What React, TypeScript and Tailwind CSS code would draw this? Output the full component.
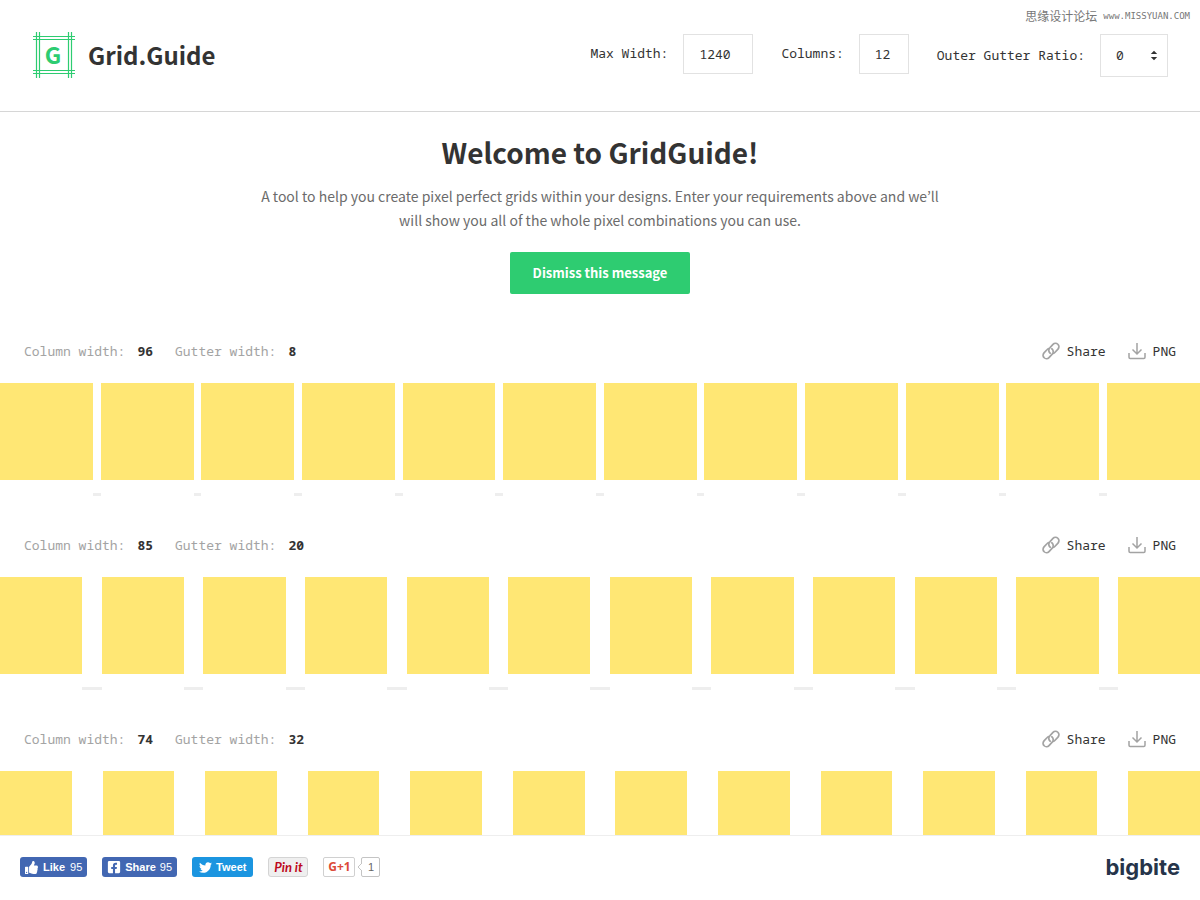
import { useState } from 'react';
import { FaFacebookSquare, FaThumbsUp, FaTwitter } from 'react-icons/fa';

type Grid = {
  column: number;
  gutter: number;
};

const grids: Grid[] = [
  { column: 96, gutter: 8 },
  { column: 85, gutter: 20 },
  { column: 74, gutter: 32 },
];

const COLUMNS = 12;

const MONO = "font-['Noto_Sans_Mono','DejaVu_Sans_Mono',monospace]";

const Logo = () => (
  <svg width="44" height="48" viewBox="0 0 44 48" fill="none" aria-hidden="true">
    <path
      d="M4.5 1v46M7.5 1v46M36.5 1v46M39.5 1v46M1 5.5h42M1 8.5h42M1 39.5h42M1 42.5h42"
      stroke="#2ecc71"
      strokeWidth="1.2"
    />
    <text
      x="21"
      y="33"
      textAnchor="middle"
      fontFamily="Noto Sans CJK KR, sans-serif"
      fontWeight="700"
      fontSize="23"
      fill="#2ecc71"
    >
      G
    </text>
  </svg>
);

const LinkIcon = () => (
  <svg width="18" height="18" viewBox="0 0 18 18" fill="none" stroke="#a3a3a3" strokeWidth="1.7" aria-hidden="true">
    <path strokeLinecap="round" d="M8.2 11.2a3.6 3.6 0 0 1-.4-5.4l3.2-3.4a3.4 3.4 0 0 1 5 4.7l-3.2 3.4a3.4 3.4 0 0 1-1.6 1" />
    <path strokeLinecap="round" d="M9.800 6.800a3.600 3.600 0 0 1 .4 5.400l-3.200 3.400a3.400 3.400 0 0 1-5-4.700l3.200-3.400a3.400 3.400 0 0 1 1.600-1" />
  </svg>
);

const DownloadIcon = () => (
  <svg width="18" height="18" viewBox="0 0 18 18" fill="none" stroke="#a3a3a3" strokeWidth="1.5" aria-hidden="true">
    <path d="M9 1v11M4.5 7.5 9 12l4.5-4.5" />
    <path d="M1 11v4.3a1.2 1.2 0 0 0 1.2 1.2h13.6a1.2 1.2 0 0 0 1.2-1.2V11" />
  </svg>
);

const Header = () => (
  <header className="relative flex shrink-0 items-start justify-between border-b border-[#d6d6d6] px-8 pt-[34px] pb-8">
    <a href="#" className="-mt-[3px] flex items-center gap-3">
      <Logo />
      <span className="text-[24px] leading-[48px] font-bold">Grid.Guide</span>
    </a>

    <form className={`flex items-start gap-7 text-[13px] ${MONO}`}>
      <label className="flex items-center gap-[15px]">
        Max Width:
        <input defaultValue="1240" className="h-10 w-[70px] border border-[#e2e2e2] px-[15px]" />
      </label>
      <label className="flex items-center gap-[15px]">
        Columns:
        <input defaultValue="12" className="h-10 w-[50px] border border-[#e2e2e2] px-[15px]" />
      </label>
      <label className="flex items-center gap-[15px]">
        Outer Gutter Ratio:
        <span className="relative">
          <select className="block h-[43px] w-[68px] appearance-none border border-[#e2e2e2] px-[15px]">
            <option>0</option>
            <option>1</option>
            <option>2</option>
          </select>
          <svg
            className="pointer-events-none absolute top-4 right-[10px]"
            width="8"
            height="11"
            viewBox="0 0 8 11"
            fill="#333"
            aria-hidden="true"
          >
            <path d="M4 .8L7.200 4H.8zM4 10.200L.8 7h6.400z" />
          </svg>
        </span>
      </label>
    </form>

    <p className="absolute top-2 right-[10px] flex items-center gap-[6px] font-['Noto_Sans_CJK_SC',sans-serif] text-xs leading-4 text-[#777]">
      思缘设计论坛
      <span className="font-['DejaVu_Sans_Mono',monospace] text-[9px]">www.MISSYUAN.COM</span>
    </p>
  </header>
);

const Welcome = ({ onDismiss }: { onDismiss: () => void }) => (
  <section className="flex flex-col items-center px-8 pt-5 text-center">
    <h1 className="text-[28px] leading-10 font-bold">Welcome to GridGuide!</h1>
    <p className="mt-3 max-w-[700px] text-[14px] leading-6 text-[#6b6b6b]">
      A tool to help you create pixel perfect grids within your designs. Enter your requirements above and we’ll
      will show you all of the whole pixel combinations you can use.
    </p>
    <button
      onClick={onDismiss}
      className="mt-5 h-[42px] w-[180px] cursor-pointer rounded-xs bg-[#2ecc71] text-[13px] font-bold text-white"
    >
      Dismiss this message
    </button>
  </section>
);

const GridRow = ({ column, gutter }: Grid) => (
  <section className="mb-[37px]">
    <div className={`flex items-center justify-between px-6 text-[13px] leading-6 ${MONO}`}>
      <div className="flex gap-[22px] text-[#a3a3a3]">
        <p className="flex gap-3">
          Column width: <b className="text-[#333]">{column}</b>
        </p>
        <p className="flex gap-3">
          Gutter width: <b className="text-[#333]">{gutter}</b>
        </p>
      </div>
      <div className="flex gap-[22px]">
        <button className="flex cursor-pointer items-center gap-[7px]">
          <LinkIcon />
          Share
        </button>
        <button className="flex cursor-pointer items-center gap-[7px]">
          <DownloadIcon />
          PNG
        </button>
      </div>
    </div>

    {/* columns and the gutter markers below them share one proportional track */}
    <div className="mt-5 flex">
      {Array.from({ length: COLUMNS * 2 - 1 }, (_, index) =>
        index % 2 === 0 ? (
          <div key={index} className="h-[97px] basis-0 bg-[#ffe774]" style={{ flexGrow: column }} />
        ) : (
          <div key={index} className="mt-[110px] h-[3px] basis-0 bg-[#eee]" style={{ flexGrow: gutter }} />
        ),
      )}
    </div>
  </section>
);

const Footer = () => (
  <footer className="flex shrink-0 items-center justify-between border-t border-[#eee] px-5 pt-[21px] pb-[23px] font-['Liberation_Sans',sans-serif] text-[11px]">
    <div className="flex gap-[15px]">
      <button className="flex h-5 items-center gap-[5px] rounded-[3px] bg-[#4267b2] px-[5px] text-white">
        <FaThumbsUp size={13} />
        <b>Like</b>
        <span>95</span>
      </button>
      <button className="flex h-5 items-center gap-1 rounded-[3px] bg-[#4267b2] px-[5px] text-white">
        <FaFacebookSquare size={14} />
        <b>Share</b>
        <span>95</span>
      </button>
      <button className="flex h-5 items-center gap-1 rounded-[3px] bg-[#1b95e0] px-[7px] text-white">
        <FaTwitter size={13} />
        <b>Tweet</b>
      </button>
      <button className="h-5 w-10 rounded-[3px] border border-[#d4d4d4] bg-[#efefef] font-['Lato',sans-serif] text-[13px] leading-4 font-bold text-[#bd081c] italic">
        Pin it
      </button>
      <div className="flex gap-[6px]">
        <button className="h-5 w-8 rounded-xs border border-[#d0d0d0] font-['Open_Sans',sans-serif] text-xs leading-4 font-bold text-[#dc4a38]">
          G+1
        </button>
        <span className="relative h-5 w-[19px] rounded-xs border border-[#c4c4c4] text-center leading-[18px] text-[#666]">
          1
          <svg className="absolute top-[5px] -left-[5px]" width="5" height="8" viewBox="0 0 5 8" fill="#fff" aria-hidden="true">
            <path d="M5 0L1 4l4 4" stroke="#c4c4c4" />
          </svg>
        </span>
      </div>
    </div>
    <a href="#" className="-my-1 font-['Inter',sans-serif] text-[22px] leading-7 font-bold text-[#26344a]">
      bigbite
    </a>
  </footer>
);

const App = () => {
  const [showWelcome, setShowWelcome] = useState(true);

  return (
    <div className="flex h-screen flex-col bg-white font-['Noto_Sans_CJK_KR',sans-serif] text-[#333]">
      <Header />
      <main className="flex-1 overflow-y-auto [scrollbar-width:none]">
        {showWelcome && <Welcome onDismiss={() => setShowWelcome(false)} />}
        <div className="pt-[45px]">
          {grids.map((grid) => (
            <GridRow key={grid.column} {...grid} />
          ))}
        </div>
      </main>
      <Footer />
    </div>
  );
};

export default App;
